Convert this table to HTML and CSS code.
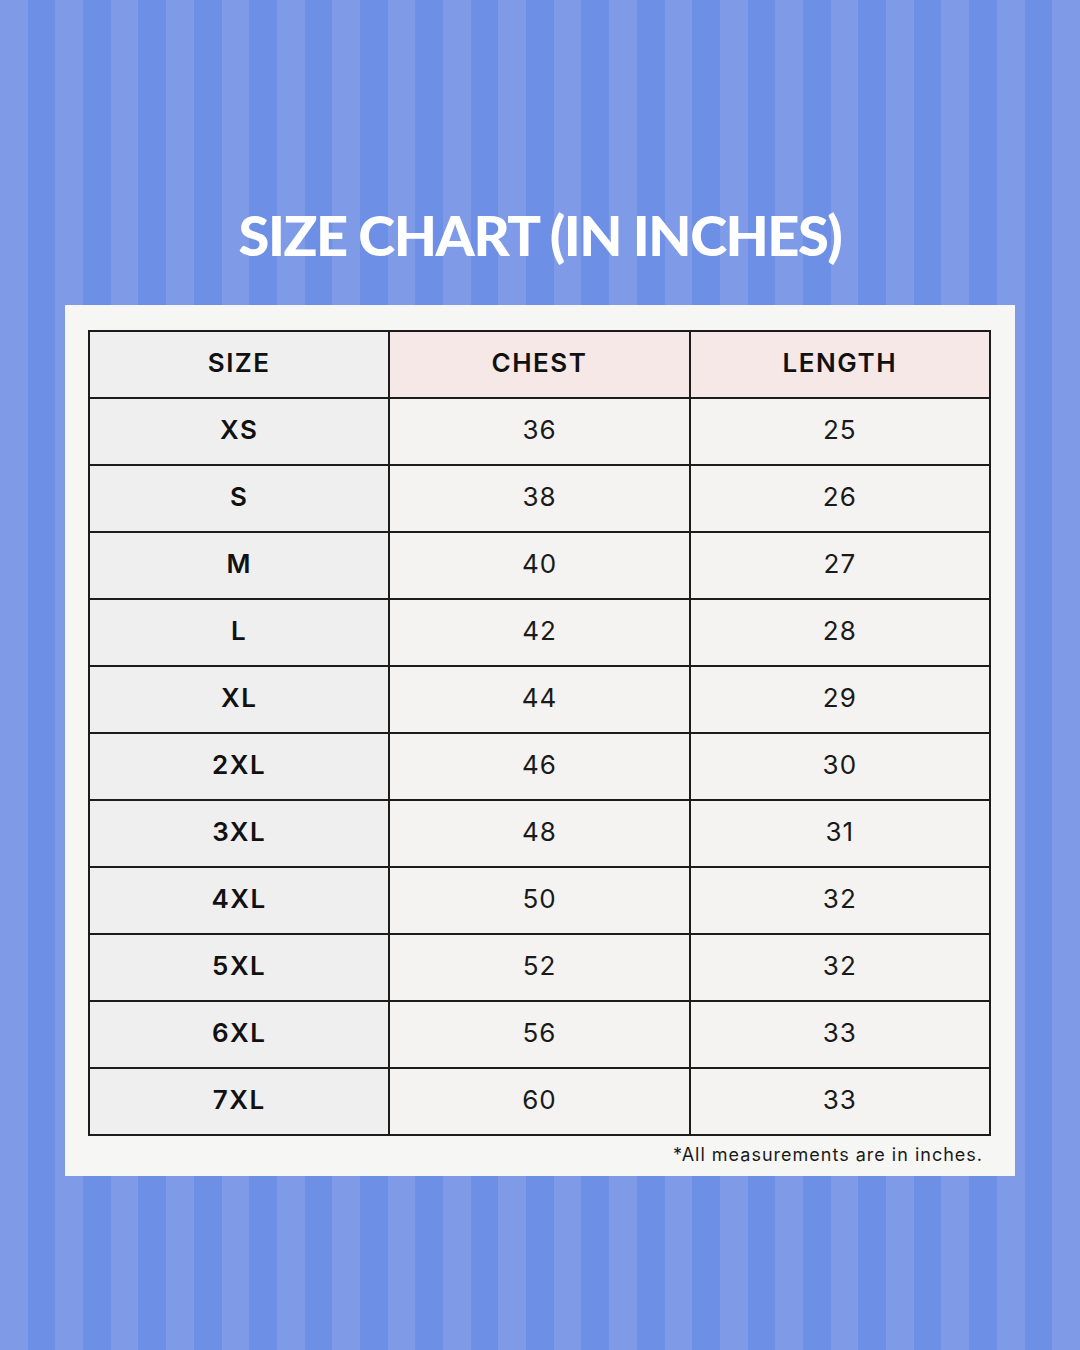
FILE: index.html
```html
<!DOCTYPE html>
<html>
<head>
<meta charset="utf-8">
<link rel="stylesheet" href="styles.css">
</head>
<body>
<div class="page">
  <h1 class="title">SIZE CHART (IN INCHES)</h1>
  <div class="card">
    <div class="chart">
      <div class="cell head first">SIZE</div>
      <div class="cell head pink">CHEST</div>
      <div class="cell head pink">LENGTH</div>

      <div class="cell size">XS</div><div class="cell num">36</div><div class="cell num">25</div>
      <div class="cell size">S</div><div class="cell num">38</div><div class="cell num">26</div>
      <div class="cell size">M</div><div class="cell num">40</div><div class="cell num">27</div>
      <div class="cell size">L</div><div class="cell num">42</div><div class="cell num">28</div>
      <div class="cell size">XL</div><div class="cell num">44</div><div class="cell num">29</div>
      <div class="cell size">2XL</div><div class="cell num">46</div><div class="cell num">30</div>
      <div class="cell size">3XL</div><div class="cell num">48</div><div class="cell num">31</div>
      <div class="cell size">4XL</div><div class="cell num">50</div><div class="cell num">32</div>
      <div class="cell size">5XL</div><div class="cell num">52</div><div class="cell num">32</div>
      <div class="cell size">6XL</div><div class="cell num">56</div><div class="cell num">33</div>
      <div class="cell size">7XL</div><div class="cell num">60</div><div class="cell num">33</div>
    </div>
    <p class="note">*All measurements are in inches.</p>
  </div>
</div>
</body>
</html>
```

FILE: styles.css
```css
html, body {
  margin: 0;
  padding: 0;
}
body {
  width: 1080px;
  height: 1350px;
  background: repeating-linear-gradient(90deg, #7f9be8 0 27.69px, #6d8fe6 27.69px 55.38px);
  font-family: Inter, "Liberation Sans", sans-serif;
  overflow: hidden;
}
.page {
  display: flex;
  flex-direction: column;
  align-items: center;
}
.title {
  margin: 200px 0 0;
  height: 70px;
  line-height: 70px;
  font-family: Lato, Inter, sans-serif;
  font-size: 56px;
  font-weight: 900;
  color: #ffffff;
  letter-spacing: -1.5px;
}
.card {
  box-sizing: border-box;
  margin-top: 35px;
  width: 950px;
  height: 871px;
  padding: 25px 24px 0 23px;
  background: #f6f6f5;
}
.chart {
  display: grid;
  grid-template-columns: 1fr 1fr 1fr;
  grid-auto-rows: 65px;
  gap: 2px;
  padding: 2px;
  background: #1c1c1c;
}
.cell {
  display: flex;
  align-items: center;
  justify-content: center;
  padding-bottom: 4px;
  box-sizing: border-box;
  color: #111;
  font-size: 26px;
}
.head {
  font-weight: 600;
  letter-spacing: 1.5px;
}
.first, .size {
  background: #efefef;
}
.pink {
  background: #f5e8e6;
}
.size {
  font-weight: 600;
  letter-spacing: 1.5px;
}
.num {
  background: #f4f3f2;
  font-weight: 400;
  letter-spacing: 1px;
  color: #1a1a1a;
}
.note {
  margin: 8px 8px 0 0;
  text-align: right;
  font-size: 18px;
  letter-spacing: 1px;
  color: #1a1a1a;
}
```
